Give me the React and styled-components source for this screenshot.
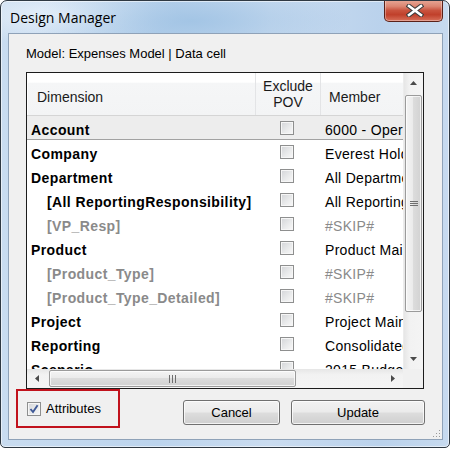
import React from "react";
import styled, { createGlobalStyle } from "styled-components";

const Global = createGlobalStyle`
  html, body { margin: 0; padding: 0; background: #ffffff; }
  body { width: 450px; height: 450px; overflow: hidden; font-family: "Liberation Sans", Arial, sans-serif; }
  * { box-sizing: border-box; }
`;

const Frame = styled.div`
  width: 450px;
  height: 448px;
  border: 1px solid #2f3943;
  border-radius: 7px 7px 5px 5px;
  background:
    radial-gradient(ellipse 160px 40px at 190px 20px, rgba(160,195,228,0.9), rgba(160,195,228,0) 100%),
    radial-gradient(ellipse 120px 30px at 60px 14px, rgba(235,243,251,0.9), rgba(235,243,251,0) 100%),
    linear-gradient(to right, #c9dcf0 0%, #bcd4ed 35%, #cadcf0 60%, #bad2ec 85%, #c7daef 100%);
  box-shadow: inset 0 0 0 1px rgba(255,255,255,0.55);
  display: flex;
  flex-direction: column;
  overflow: hidden;
`;

const TitleBar = styled.div`
  height: 32px;
  flex: none;
  display: flex;
  align-items: flex-start;
  justify-content: space-between;
`;

const Title = styled.div`
  font-family: "Open Sans", "Noto Sans", sans-serif;
  font-size: 14px;
  line-height: 20px;
  color: #000;
  padding: 7px 0 0 9px;
`;

const CloseButton = styled.div`
  width: 59px;
  height: 22px;
  margin-right: 6px;
  margin-top: -1px;
  border: 1px solid #5a2119;
  border-top: none;
  border-radius: 0 0 5px 5px;
  background: linear-gradient(to bottom, #e8a897 0%, #dc8672 30%, #c9523d 50%, #c0402b 70%, #d8705a 100%);
  box-shadow: inset 0 0 0 1px rgba(255,255,255,0.35);
  display: flex;
  align-items: center;
  justify-content: center;
  padding-left: 3px;
`;

const Client = styled.div`
  flex: 1;
  margin: 0 6px 7px 7px;
  border: 1px solid #8fa2b8;
  background: #f0f0f0;
  padding: 12px 17px 0 7px;
  display: flex;
  flex-direction: column;
  position: relative;
`;

const ModelLabel = styled.div`
  font-size: 13px;
  line-height: 16px;
  color: #000;
  margin-left: 10px;
`;

const GridBox = styled.div`
  margin: 10px 0 0 10px;
  width: 398px;
  height: 317px;
  border: 1px solid #1c1c1c;
  background: #fff;
  display: grid;
  grid-template-columns: 376px 20px;
  grid-template-rows: 296px 19px;
`;

const Main = styled.div`
  overflow: hidden;
  display: flex;
  flex-direction: column;
`;

const cols = "229px 65px 160px";

const HeaderRow = styled.div`
  height: 43px;
  flex: none;
  display: grid;
  grid-template-columns: ${cols};
  border-bottom: 1px solid #d5d5d5;
  background: linear-gradient(to bottom, #ffffff 0%, #ffffff 22%, #f5f6f7 24%, #f3f4f5 100%);
  box-shadow: inset 1px 1px 0 #fff;
`;

const HeadCell = styled.div`
  font-size: 14px;
  line-height: 16px;
  color: #1a1a1a;
  display: flex;
  align-items: center;
  justify-content: ${(p) => (p.$center ? "center" : "flex-start")};
  text-align: ${(p) => (p.$center ? "center" : "left")};
  padding-left: ${(p) => p.$pad || 0}px;
  padding-top: ${(p) => p.$top || 0}px;
  border-right: ${(p) => (p.$sep ? "1px solid #e3e4e6" : "none")};
  white-space: nowrap;
`;

const Row = styled.div`
  height: 24px;
  flex: none;
  display: grid;
  grid-template-columns: ${cols};
  background: ${(p) => (p.$selected ? "#ededed" : "#ffffff")};
  border-bottom: ${(p) => (p.$selected ? "1px solid #a2a2a2" : "none")};
`;

const DimCell = styled.div`
  font-size: 14px;
  font-weight: bold;
  letter-spacing: 0.4px;
  line-height: 20px;
  padding-top: 4px;
  padding-left: ${(p) => (p.$indent ? 20 : 4)}px;
  color: ${(p) => (p.$muted ? "#8a8a8a" : "#000")};
  white-space: nowrap;
  overflow: hidden;
`;

const CheckCell = styled.div`
  display: flex;
  align-items: center;
  padding-left: 24px;
`;

const MemberCell = styled.div`
  font-size: 14px;
  letter-spacing: 0.3px;
  line-height: 20px;
  padding-top: 4px;
  padding-left: 4px;
  color: ${(p) => (p.$muted ? "#8a8a8a" : "#000")};
  white-space: nowrap;
  overflow: hidden;
`;

const Box = styled.div`
  width: 14px;
  height: 14px;
  flex: none;
  border: 1px solid #8e8f8f;
  background: linear-gradient(135deg, #d3d5d8 0%, #e9eaeb 55%, #f9f9f9 100%);
  box-shadow: inset 0 0 0 1px #f6f6f6;
  display: flex;
  align-items: center;
  justify-content: center;
`;

const VScroll = styled.div`
  background: linear-gradient(to right, #e6e6e6 0%, #f2f2f2 30%, #f4f4f4 100%);
  border-left: 1px solid #ececec;
  display: flex;
  flex-direction: column;
`;

const HScroll = styled.div`
  background: linear-gradient(to bottom, #e6e6e6 0%, #f2f2f2 30%, #f4f4f4 100%);
  display: flex;
  flex-direction: row;
  align-items: stretch;
`;

const Corner = styled.div`
  background: #f0f0f0;
`;

const ArrowBox = styled.div`
  width: ${(p) => (p.$h ? "20px" : "100%")};
  height: ${(p) => (p.$h ? "100%" : "20px")};
  flex: none;
  display: flex;
  align-items: center;
  justify-content: center;
`;

const Spacer = styled.div`
  flex: 1;
`;

const Thumb = styled.div`
  flex: none;
  border: 1px solid #9b9b9b;
  border-radius: 2px;
  display: flex;
  align-items: center;
  justify-content: center;
  ${(p) =>
    p.$h
      ? `width: 247px; margin: 1px 0 1px 2px;
         background: linear-gradient(to bottom, #f4f4f4 0%, #ebebeb 45%, #dcdcdc 50%, #d2d2d2 100%);`
      : `height: 217px; margin: 2px 1px 0 1px;
         background: linear-gradient(to right, #f4f4f4 0%, #ebebeb 45%, #dcdcdc 50%, #d2d2d2 100%);`}
  box-shadow: inset 0 0 0 1px rgba(255,255,255,0.7);
`;

const Bottom = styled.div`
  display: flex;
  align-items: flex-start;
`;

const Highlight = styled.div`
  width: 104px;
  height: 39px;
  border: 2px solid #c1121c;
  display: flex;
  align-items: center;
  padding-left: 9px;
  gap: 5px;
`;

const AttrLabel = styled.span`
  font-size: 13px;
  color: #000;
  line-height: 16px;
`;

const Buttons = styled.div`
  margin-left: auto;
  margin-top: 11px;
  display: flex;
  gap: 11px;
`;

const Button = styled.div`
  width: ${(p) => p.$w}px;
  height: 25px;
  border: 1px solid #707070;
  border-radius: 3px;
  background: linear-gradient(to bottom, #f2f2f2 0%, #ebebeb 48%, #dddddd 52%, #cfcfcf 100%);
  box-shadow: inset 0 0 0 1px rgba(255,255,255,0.75);
  display: flex;
  align-items: center;
  justify-content: center;
  font-size: 13px;
  color: #000;
`;

const Grip = styled.svg`
  position: absolute;
  right: 1px;
  bottom: 1px;
`;

const rows = [
  { dim: "Account", member: "6000 - Operating Expenses", selected: true },
  { dim: "Company", member: "Everest Holdings" },
  { dim: "Department", member: "All Departments" },
  { dim: "[All ReportingResponsibility]", member: "All ReportingResponsibility", indent: true },
  { dim: "[VP_Resp]", member: "#SKIP#", indent: true, muted: true },
  { dim: "Product", member: "Product Main" },
  { dim: "[Product_Type]", member: "#SKIP#", indent: true, muted: true },
  { dim: "[Product_Type_Detailed]", member: "#SKIP#", indent: true, muted: true },
  { dim: "Project", member: "Project Main" },
  { dim: "Reporting", member: "Consolidated" },
  { dim: "Scenario", member: "2015 Budget" },
];

const Tri = ({ dir }) => {
  const pts = {
    up: "0,4 7,4 3.5,0",
    down: "0,0 7,0 3.5,4",
    left: "4,0 4,7 0,3.5",
    right: "0,0 0,7 4,3.5",
  }[dir];
  const vertical = dir === "up" || dir === "down";
  return (
    <svg width={vertical ? 7 : 4} height={vertical ? 4 : 7} viewBox={vertical ? "0 0 7 4" : "0 0 4 7"}>
      <polygon points={pts} fill="#4a4a4a" />
    </svg>
  );
};

export default function App() {
  return (
    <>
      <Global />
      <Frame>
        <TitleBar>
          <Title>Design Manager</Title>
          <CloseButton>
            <svg width="18" height="13" viewBox="0 0 18 13">
              <path d="M3 2 L15 11 M15 2 L3 11" stroke="#3b3b3b" strokeWidth="4.6" strokeLinecap="square" fill="none" />
              <path d="M3 2 L15 11 M15 2 L3 11" stroke="#ffffff" strokeWidth="2.6" strokeLinecap="square" fill="none" />
            </svg>
          </CloseButton>
        </TitleBar>
        <Client>
          <ModelLabel>Model: Expenses Model | Data cell</ModelLabel>
          <GridBox>
            <Main>
              <HeaderRow>
                <HeadCell $sep $pad={10} $top={5}>Dimension</HeadCell>
                <HeadCell $sep $center>
                  Exclude
                  <br />
                  POV
                </HeadCell>
                <HeadCell $pad={8} $top={5}>Member</HeadCell>
              </HeaderRow>
              {rows.map((r) => (
                <Row key={r.dim} $selected={r.selected}>
                  <DimCell $indent={r.indent} $muted={r.muted}>{r.dim}</DimCell>
                  <CheckCell>
                    <Box />
                  </CheckCell>
                  <MemberCell $muted={r.member === "#SKIP#"}>{r.member}</MemberCell>
                </Row>
              ))}
            </Main>
            <VScroll>
              <ArrowBox><Tri dir="up" /></ArrowBox>
              <Thumb>
                <svg width="8" height="5" viewBox="0 0 8 5">
                  <path d="M0 0.5 H8 M0 2.5 H8 M0 4.5 H8" stroke="#6e6e6e" strokeWidth="1" />
                </svg>
              </Thumb>
              <Spacer />
              <ArrowBox><Tri dir="down" /></ArrowBox>
            </VScroll>
            <HScroll>
              <ArrowBox $h><Tri dir="left" /></ArrowBox>
              <Thumb $h>
                <svg width="7" height="8" viewBox="0 0 7 8">
                  <path d="M0.5 0 V8 M3.5 0 V8 M6.5 0 V8" stroke="#6e6e6e" strokeWidth="1" />
                </svg>
              </Thumb>
              <Spacer />
              <ArrowBox $h><Tri dir="right" /></ArrowBox>
            </HScroll>
            <Corner />
          </GridBox>
          <Bottom>
            <Highlight>
              <Box>
                <svg width="10" height="10" viewBox="0 0 10 10">
                  <path d="M1.5 5 L4 8 L8.6 1.2" stroke="#3f5996" strokeWidth="1.9" fill="none" />
                </svg>
              </Box>
              <AttrLabel>Attributes</AttrLabel>
            </Highlight>
            <Buttons>
              <Button $w={97}>Cancel</Button>
              <Button $w={134}>Update</Button>
            </Buttons>
          </Bottom>
          <Grip width="10" height="10" viewBox="0 0 10 10">
            <rect x="8" y="2" width="1" height="1" fill="#9a9a9a" />
            <rect x="5" y="5" width="1" height="1" fill="#9a9a9a" />
            <rect x="8" y="5" width="1" height="1" fill="#9a9a9a" />
            <rect x="2" y="8" width="1" height="1" fill="#9a9a9a" />
            <rect x="5" y="8" width="1" height="1" fill="#9a9a9a" />
            <rect x="8" y="8" width="1" height="1" fill="#9a9a9a" />
          </Grip>
        </Client>
      </Frame>
    </>
  );
}
